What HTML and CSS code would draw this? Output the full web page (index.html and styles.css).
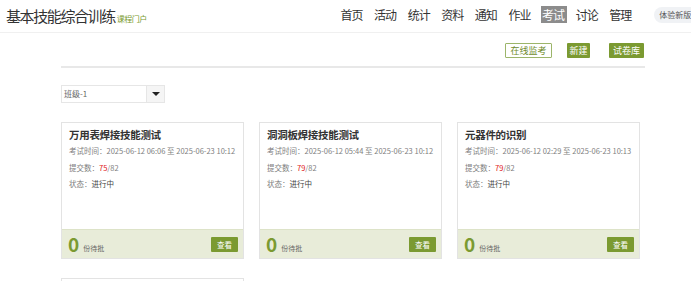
FILE: index.html
```html
<!DOCTYPE html>
<html lang="zh-CN">
<head>
    <meta charset="UTF-8">
    <title>考试</title>
    <link rel="stylesheet" href="styles.css">
</head>
<body>
    <div class="header">
        <div class="brand">
            <span class="brandTitle">基本技能综合训练</span><span class="brandSub">课程门户</span>
        </div>
        <div class="nav">
            <a class="navItem">首页</a>
            <a class="navItem">活动</a>
            <a class="navItem">统计</a>
            <a class="navItem">资料</a>
            <a class="navItem">通知</a>
            <a class="navItem">作业</a>
            <a class="navItem navActive">考试</a>
            <a class="navItem">讨论</a>
            <a class="navItem">管理</a>
            <span class="newVersion">体验新版</span>
        </div>
    </div>
    <div class="main">
        <div class="toolBar">
            <span class="btn btnLine">在线监考</span>
            <span class="btn btnGreen btnNew">新建</span>
            <span class="btn btnGreen btnLib">试卷库</span>
        </div>
        <div class="selectBox">
            <span class="selectText">班级-1</span>
            <span class="selectArrow"><i class="caret"></i></span>
        </div>
        <div class="cardGrid">
            <div class="card">
                <div class="cardBody">
                    <p class="cardTitle">万用表焊接技能测试</p>
                    <p class="cardLine">考试时间：2025-06-12 06:06 至 2025-06-23 10:12</p>
                    <p class="cardLine">提交数：<span class="red">75</span>/82</p>
                    <p class="cardLine">状态：<span class="dark">进行中</span></p>
                </div>
                <div class="cardFoot">
                    <span class="count">0</span><span class="countText">份待批</span>
                    <span class="viewBtn">查看</span>
                </div>
            </div>
            <div class="card">
                <div class="cardBody">
                    <p class="cardTitle">洞洞板焊接技能测试</p>
                    <p class="cardLine">考试时间：2025-06-12 05:44 至 2025-06-23 10:12</p>
                    <p class="cardLine">提交数：<span class="red">79</span>/82</p>
                    <p class="cardLine">状态：<span class="dark">进行中</span></p>
                </div>
                <div class="cardFoot">
                    <span class="count">0</span><span class="countText">份待批</span>
                    <span class="viewBtn">查看</span>
                </div>
            </div>
            <div class="card">
                <div class="cardBody">
                    <p class="cardTitle">元器件的识别</p>
                    <p class="cardLine">考试时间：2025-06-12 02:29 至 2025-06-23 10:13</p>
                    <p class="cardLine">提交数：<span class="red">79</span>/82</p>
                    <p class="cardLine">状态：<span class="dark">进行中</span></p>
                </div>
                <div class="cardFoot">
                    <span class="count">0</span><span class="countText">份待批</span>
                    <span class="viewBtn">查看</span>
                </div>
            </div>
            <div class="card">
                <div class="cardBody"></div>
            </div>
        </div>
    </div>
</body>
</html>
```

FILE: styles.css
```css
*{
    margin: 0;
    padding: 0;
    box-sizing: border-box;
}
body{
    font-family: "Noto Sans CJK SC", "Noto Sans", sans-serif;
    color: #333;
    background-color: #fff;
    overflow: hidden;
}
.header{
    height: 33px;
    border-bottom: 1px solid #f0f0f0;
    display: flex;
    align-items: center;
    padding-left: 6px;
    overflow: hidden;
}
.brand{
    width: 333px;
    flex-shrink: 0;
    display: flex;
    align-items: flex-end;
}
.brandTitle{
    font-size: 15px;
    letter-spacing: -1.4px;
    color: #333;
    line-height: 20px;
}
.brandSub{
    font-size: 8px;
    color: #7a9a2f;
    margin-left: 2px;
    line-height: 14px;
    letter-spacing: -0.5px;
}
.nav{
    display: flex;
    align-items: center;
    gap: 7.6px;
    margin-top: -3px;
    flex-shrink: 0;
}
.navItem{
    font-size: 12px;
    letter-spacing: -1px;
    line-height: 17px;
    padding: 0 2px 0 1px;
    color: #333;
    width: 26px;
    text-align: center;
}
.navActive{
    background-color: #8c8c8c;
    color: #fff;
}
.newVersion{
    margin-left: 13px;
    background-color: #f0f2f5;
    border-radius: 8px;
    font-size: 8px;
    line-height: 16px;
    padding: 0 5px;
    color: #555;
    white-space: nowrap;
    width: 52px;
}
.main{
    width: 584px;
    margin-left: 61px;
}
.toolBar{
    display: flex;
    justify-content: flex-end;
    padding-top: 10px;
    padding-bottom: 8px;
    border-bottom: 2px solid #e8e8e8;
    padding-right: 1px;
}
.btn{
    font-size: 9px;
    line-height: 13px;
    height: 15px;
    padding-top: 1px;
    text-align: center;
    border-radius: 1px;
}
.btnLine{
    width: 47px;
    border: 1px solid #9cb56a;
    color: #6e8a2c;
    padding-top: 0;
}
.btnGreen{
    background-color: #7b9a31;
    color: #fff;
}
.btnNew{
    width: 23px;
    margin-left: 15px;
}
.btnLib{
    width: 35px;
    margin-left: 19px;
}
.selectBox{
    width: 104px;
    height: 18px;
    margin-top: 17px;
    border: 1px solid #e6e6e6;
    display: flex;
}
.selectText{
    flex: 1;
    font-size: 8px;
    line-height: 16px;
    padding-left: 2px;
    color: #666;
}
.selectArrow{
    width: 18px;
    border-left: 1px solid #e6e6e6;
    background-color: #f5f5f5;
    display: flex;
    align-items: center;
    justify-content: center;
}
.caret{
    width: 0;
    height: 0;
    border-left: 4px solid transparent;
    border-right: 4px solid transparent;
    border-top: 4px solid #222;
}
.cardGrid{
    display: grid;
    grid-template-columns: repeat(3, 183px);
    column-gap: 15px;
    row-gap: 19px;
    margin-top: 19px;
}
.card{
    height: 137px;
    border: 1px solid #e3e3e3;
    display: flex;
    flex-direction: column;
}
.cardBody{
    flex: 1;
    padding: 4px 7px 0;
}
.cardTitle{
    font-size: 10.5px;
    font-weight: bold;
    letter-spacing: -0.3px;
    color: #333;
    line-height: 16px;
}
.cardLine{
    font-size: 7.5px;
    color: #808080;
    line-height: 11px;
    margin-top: 5.5px;
    white-space: nowrap;
}
.cardTitle + .cardLine{
    margin-top: 2px;
}
.red{
    color: #e02020;
}
.dark{
    color: #444;
}
.cardFoot{
    height: 29px;
    background-color: #e8ecd9;
    border-top: 1px solid #dde3c8;
    display: flex;
    align-items: center;
    padding: 0 5px 0 6px;
}
.count{
    font-size: 19px;
    font-weight: bold;
    color: #7b9a31;
    line-height: 20px;
}
.countText{
    font-size: 7px;
    color: #666;
    margin-left: 4px;
    margin-top: 7px;
}
.viewBtn{
    margin-left: auto;
    background-color: #7b9a31;
    color: #fff;
    font-size: 7.5px;
    line-height: 15px;
    padding: 0 6px;
    border-radius: 1px;
}
```
